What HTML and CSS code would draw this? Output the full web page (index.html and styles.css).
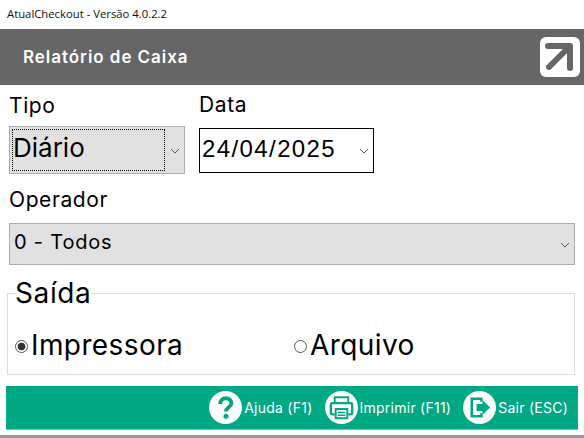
FILE: index.html
```html
<!DOCTYPE html>
<html lang="pt-BR">
<head>
    <meta charset="UTF-8">
    <meta name="viewport" content="width=device-width, initial-scale=1.0">
    <title>AtualCheckout - Relatório de Caixa</title>
    <link rel="stylesheet" href="styles.css">
</head>
<body>
    <div class="janela">
        <div class="titulo-janela">AtualCheckout - Versão 4.0.2.2</div>

        <header class="cabecalho">
            <h1>Relatório de Caixa</h1>
            <svg class="logo" viewBox="0 0 40 40">
                <rect width="40" height="40" rx="6" fill="#fff"/>
                <path d="M8 9H30V31" fill="none" stroke="#666" stroke-width="6" stroke-linejoin="round" stroke-linecap="round"/>
                <path d="M29 10L9 30" fill="none" stroke="#666" stroke-width="6" stroke-linecap="round"/>
            </svg>
        </header>

        <main class="conteudo">
            <div class="linha-campos">
                <div class="campo campo-tipo">
                    <label>Tipo</label>
                    <div class="combo combo-tipo">
                        <span class="foco">Diário</span>
                        <svg class="seta" viewBox="0 0 10 6"><path d="M1 1L5 5L9 1" fill="none" stroke="#555" stroke-width="1"/></svg>
                    </div>
                </div>
                <div class="campo campo-data">
                    <label>Data</label>
                    <div class="combo combo-data">
                        <span>24/04/2025</span>
                        <svg class="seta" viewBox="0 0 10 6"><path d="M1 1L5 5L9 1" fill="none" stroke="#555" stroke-width="1"/></svg>
                    </div>
                </div>
            </div>

            <div class="campo campo-operador">
                <label>Operador</label>
                <div class="combo combo-operador">
                    <span>0 - Todos</span>
                    <svg class="seta" viewBox="0 0 10 6"><path d="M1 1L5 5L9 1" fill="none" stroke="#555" stroke-width="1"/></svg>
                </div>
            </div>

            <fieldset class="saida">
                <legend>Saída</legend>
                <div class="opcoes">
                    <label class="opcao opcao-impressora">
                        <input type="radio" name="saida" checked>Impressora
                    </label>
                    <label class="opcao">
                        <input type="radio" name="saida">Arquivo
                    </label>
                </div>
            </fieldset>
        </main>

        <footer class="rodape">
            <div class="acao">
                <svg class="icone" viewBox="0 0 34 34">
                    <circle cx="17" cy="17" r="17" fill="#fff"/>
                    <path d="M11.5 13.5C11.5 10 14 7.5 17.2 7.5C20.6 7.5 23 9.8 23 12.8C23 16.6 17.5 17 17.5 21" fill="none" stroke="#00a884" stroke-width="4"/>
                    <circle cx="17.5" cy="26" r="2.6" fill="#00a884"/>
                </svg>
                <span>Ajuda (F1)</span>
            </div>
            <div class="acao">
                <svg class="icone" viewBox="0 0 34 34">
                    <circle cx="17" cy="17" r="17" fill="#fff"/>
                    <path d="M10 12V6.5H24V12" fill="none" stroke="#00a884" stroke-width="2"/>
                    <path d="M10 24H7.5Q6 24 6 22.5V14Q6 12.5 7.5 12.5H26.5Q28 12.5 28 14V22.5Q28 24 26.5 24H24" fill="none" stroke="#00a884" stroke-width="2.4"/>
                    <path d="M11 18.5H23V28H11Z" fill="none" stroke="#00a884" stroke-width="2"/>
                    <path d="M13 22H21M13 25H21" stroke="#00a884" stroke-width="1.4"/>
                </svg>
                <span>Imprimir (F11)</span>
            </div>
            <div class="acao">
                <svg class="icone" viewBox="0 0 34 34">
                    <circle cx="17" cy="17" r="17" fill="#fff"/>
                    <path d="M19 11V8H9V26H19V23" fill="none" stroke="#00a884" stroke-width="2.6"/>
                    <path d="M14 13.5H20V9.5L28 17L20 24.5V20.5H14Z" fill="#00a884"/>
                </svg>
                <span>Sair (ESC)</span>
            </div>
        </footer>
        <div class="barra-baixo"></div>
    </div>
</body>
</html>
```

FILE: styles.css
```css
html, body {
    margin: 0;
    padding: 0;
    background-color: white;
}
.janela {
    width: 584px;
    height: 438px;
    overflow: hidden;
    font-family: "Inter", "Lato", sans-serif;
    color: black;
}
.titulo-janela {
    height: 29px;
    padding-left: 7px;
    line-height: 27px;
    font-family: "Open Sans", sans-serif;
    font-size: 11.3px;
    color: #111;
}
.cabecalho {
    height: 56px;
    background-color: #666;
    display: flex;
    justify-content: space-between;
    align-items: center;
    padding: 0 4px 0 23px;
}
.cabecalho h1 {
    margin: 0;
    font-size: 17px;
    font-weight: 600;
    color: white;
    letter-spacing: 0.95px;
}
.logo {
    width: 40px;
    height: 40px;
}
.conteudo {
    padding: 0 9px;
}
.linha-campos {
    display: flex;
    gap: 14px;
    height: 95px;
}
.campo label {
    display: block;
    font-size: 21px;
    letter-spacing: 0.6px;
    line-height: 24px;
}
.campo-tipo label {
    padding-top: 9px;
    margin-bottom: 8px;
}
.campo-data label {
    padding-top: 8px;
    margin-bottom: 11px;
}
.combo {
    display: flex;
    justify-content: space-between;
    align-items: center;
    box-sizing: border-box;
}
.combo-tipo {
    width: 176px;
    height: 48px;
    background-color: #e1e1e1;
    border: 1px solid #adadad;
    padding: 2px 4px 2px 2px;
    font-size: 26px;
}
.foco {
    width: 153px;
    height: 100%;
    box-sizing: border-box;
    border: 1px dotted black;
    line-height: 36px;
}
.combo-data {
    width: 175px;
    height: 45px;
    border: 1px solid black;
    padding: 0 4px 4px 2px;
    font-family: "Liberation Sans", sans-serif;
    font-size: 24px;
    letter-spacing: 1.4px;
}
.seta {
    width: 10px;
    height: 6px;
}
.combo-data .seta {
    margin-top: 5px;
}
.combo-tipo .seta {
    margin-top: 1px;
}
.combo-operador .seta {
    margin-top: 7px;
}
.campo-operador label {
    padding-top: 8px;
    margin-bottom: 11px;
}
.combo-operador {
    width: 566px;
    height: 42px;
    background-color: #e1e1e1;
    border: 1px solid #adadad;
    padding: 0 4px 5px 4px;
    font-size: 20px;
    letter-spacing: 0.8px;
}
.saida {
    width: 568px;
    height: 97px;
    box-sizing: border-box;
    margin: 13px 0 0 -2px;
    padding: 0 7px;
    border: 1px solid #dcdcdc;
}
.saida legend {
    padding: 0;
    font-size: 28px;
    line-height: 30px;
    letter-spacing: 0.6px;
}
.opcoes {
    display: flex;
    margin-top: 19px;
}
.opcao {
    display: flex;
    align-items: center;
    font-size: 28px;
    line-height: 36px;
    letter-spacing: 0.4px;
}
.opcao-impressora {
    width: 279px;
}
.opcao input {
    appearance: none;
    width: 13px;
    height: 13px;
    margin: 3px 3px 0 0;
    border: 1px solid #555;
    border-radius: 50%;
    background-color: white;
    box-sizing: border-box;
}
.opcao input:checked {
    background: radial-gradient(circle, #333 0, #333 3.5px, white 4.2px);
}
.rodape {
    height: 43px;
    margin: 11px 6px 0;
    background-color: #00a884;
    border-bottom: 1px solid #aaa;
    display: flex;
    justify-content: flex-end;
    align-items: center;
    gap: 12px;
    padding-right: 10px;
    color: white;
    font-size: 14px;
    letter-spacing: 0.25px;
}
.acao {
    display: flex;
    align-items: center;
    gap: 2px;
}
.icone {
    width: 33px;
    height: 33px;
}
.barra-baixo {
    height: 3px;
    margin-top: 5px;
    background-color: #999;
}
```
